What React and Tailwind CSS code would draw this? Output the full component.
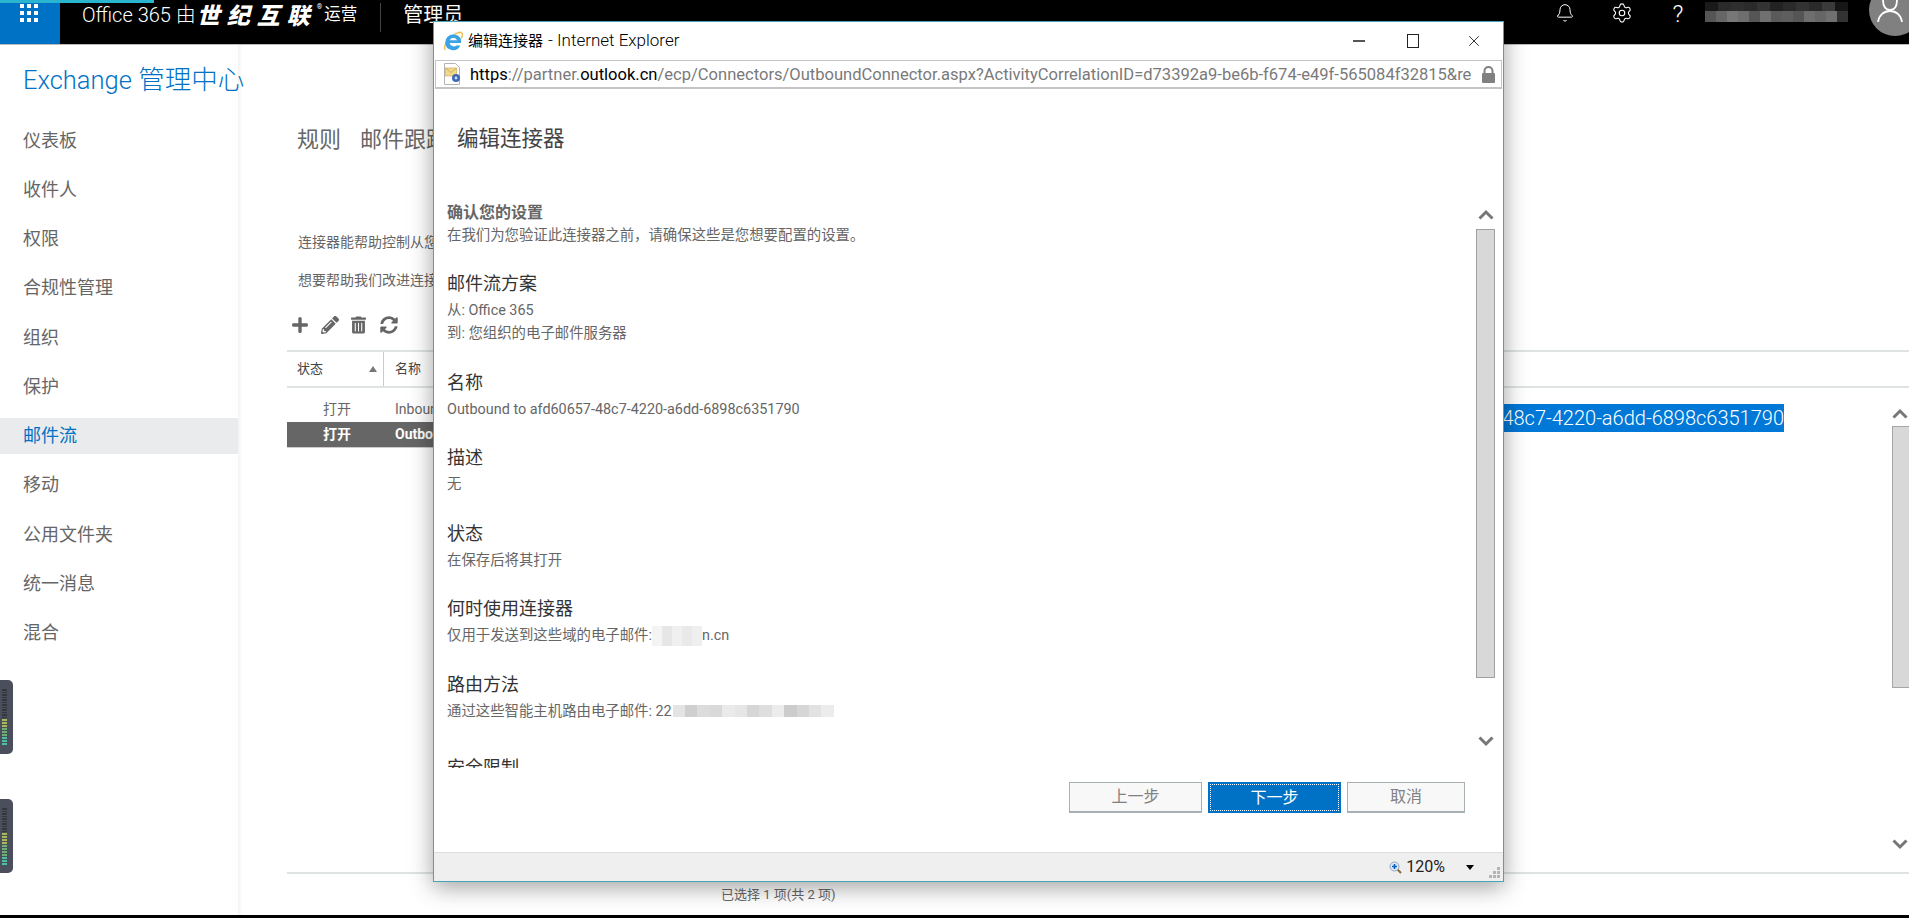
import { Bell, Settings, X } from 'lucide-react';
import { FaPlus, FaPencilAlt, FaTrashAlt, FaSyncAlt } from 'react-icons/fa';

const navItems = ['仪表板', '收件人', '权限', '合规性管理', '组织', '保护', '邮件流', '移动', '公用文件夹', '统一消息', '混合'];

// pixelated redaction blocks
const nameTop = ['#1a1a1a', '#2a2a2a', '#2e2e2e', '#2a2a2a', '#333', '#222', '#2a2a2a', '#333', '#2a2a2a', '#3a3a3a', '#161616'];
const nameBottom = ['#555', '#666', '#777', '#6e6e6e', '#555', '#707070', '#5a5a5a', '#5e5e5e', '#555', '#6e6e6e', '#666', '#707070', '#333'];
const domainBlur = ['#f4f4f4', '#e6e6e6', '#f0f0f0', '#e9e9e9', '#efefef'];
const hostBlur = ['#e4e4e4', '#cfcfcf', '#dcdcdc', '#d9d9d9', '#eaeaea', '#e6e6e6', '#d6d6d6', '#dedede', '#ececec', '#cccccc', '#d6d6d6', '#e2e2e2', '#ececec'];

const Meter = ({ dark, lit, bottom }) => (
  <div className="w-[13px] h-[74px] bg-[#4b4f5c] rounded-r-[5px] pl-[2px] flex flex-col justify-end gap-[1px]" style={{ paddingBottom: bottom }}>
    {Array.from({ length: dark }).map((_, i) => (
      <div key={i} className="w-[5px] h-[1.500px] bg-[#34363f]" />
    ))}
    {Array.from({ length: lit }).map((_, i) => (
      <div key={i} className={`w-[5px] h-[2px] ${i < lit / 3 ? 'bg-[#a8b85a]' : i < (lit * 2) / 3 ? 'bg-[#6fae74]' : 'bg-[#4cc0a0]'}`} />
    ))}
  </div>
);

const Section = ({ title, lines, children }) => (
  <div className="mb-[22.500px]">
    <div className="text-[18px] leading-[30px] text-[#333]">{title}</div>
    {lines && lines.map((l) => (
      <div key={l} className="text-[14.400px] leading-[23px] text-[#666]">{l}</div>
    ))}
    {children}
  </div>
);

const ChevUp = ({ className }) => (
  <svg viewBox="0 0 16 11" className={className}>
    <path d="M1.500 9.500L8 3l6.500 6.500" fill="none" stroke="#777" strokeWidth="3" />
  </svg>
);

const ChevDown = ({ className }) => (
  <svg viewBox="0 0 16 11" className={className}>
    <path d="M1.500 1.500L8 8l6.500-6.500" fill="none" stroke="#777" strokeWidth="3" />
  </svg>
);

const IeIcon = () => (
  <svg viewBox="0 0 20 20" className="w-[20px] h-[21px]">
    <path d="M2.500 18.500C0 16.500 3 10 8 5.500 12.500 1.500 17 0 18.800 1.500c1.200 1.200.5 3.500-.8 5.500" fill="none" stroke="#eec25a" strokeWidth="1.600" />
    <path d="M10.500 3a7.800 7.800 0 0 0-8.300 8A7.900 7.900 0 0 0 17.300 14h-4a4.200 4.200 0 0 1-6.700-2.500h11.500C18.800 6.500 15.500 3 10.500 3zM6.700 8.800a3.900 3.900 0 0 1 7.400 0z" fill="#3aa3e3" />
  </svg>
);

const MailPage = () => (
  <svg viewBox="0 0 20 22" className="w-[20px] h-[22px] shrink-0">
    <path d="M2.500.5h11l4 4v17h-15z" fill="#fff" stroke="#b4b4b4" />
    <rect x="3.500" y="5" width="11" height="8" fill="#f2d98a" stroke="#c9a74e" strokeWidth=".6" />
    <path d="M3.500 5l5.500 4.500L14.500 5" fill="none" stroke="#c9a74e" strokeWidth=".8" />
    <circle cx="14" cy="15" r="4" fill="#3f69b5" />
    <circle cx="14" cy="15" r="1.400" fill="#cfe0f5" />
  </svg>
);

const Padlock = () => (
  <svg viewBox="0 0 15 17" className="w-[15px] h-[17px] ml-[9px] shrink-0">
    <path d="M3.500 8V5a4 4 0 0 1 8 0v3" fill="none" stroke="#808080" strokeWidth="2" />
    <rect x="1" y="7" width="13" height="10" rx="1" fill="#808080" />
  </svg>
);

const DialogWindow = () => (
  <div className="absolute left-[433px] top-[21px] w-[1071px] h-[861px] bg-white border border-[#45a6b5] shadow-[0_5px_22px_rgba(0,0,0,0.38)] flex flex-col">
    {/* title bar */}
    <div className="h-[38px] flex items-center pl-[9px] shrink-0 text-black">
      <IeIcon />
      <span className="ml-[5px] text-[15px]">编辑连接器</span>
      <span className="ml-[5px] text-[17px] font-light">- Internet Explorer</span>
      <div className="ml-auto flex items-center text-[#222]">
        <div className="w-[12px] h-[2px] bg-[#555] mr-[42px]" />
        <div className="w-[12px] h-[14px] border border-[#222] mr-[46px]" />
        <X className="w-[18px] h-[18px] mr-[20px]" strokeWidth={1.200} />
      </div>
    </div>
    {/* address bar */}
    <div className="mx-[1px] h-[29px] mb-[1px] border border-[#c4c4c4] border-b-2 flex items-center pl-[6px] shrink-0 text-[16.550px] text-[#7a7a7a] whitespace-nowrap">
      <MailPage />
      <span className="ml-[8px] w-[1002px] overflow-hidden pt-[2px]">
        <span className="text-black">https</span>://partner.<span className="text-black">outlook.cn</span>/ecp/Connectors/OutboundConnector.aspx?ActivityCorrelationID=d73392a9-be6b-f674-e49f-565084f32815&amp;re
      </span>
      <Padlock />
    </div>
    {/* body */}
    <div className="flex-1 flex flex-col min-h-0">
      <div className="h-[110px] shrink-0 pl-[23px] pt-[34px] text-[21.500px] leading-[30px] text-[#444]">编辑连接器</div>
      <div className="h-[568px] shrink-0 flex">
        <div className="flex-1 overflow-hidden pl-[13px] pt-[1px]">
          <div className="mb-[22px]">
            <div className="text-[16px] leading-[24px] font-bold text-[#666]">确认您的设置</div>
            <div className="text-[14.400px] leading-[22px] text-[#666]">在我们为您验证此连接器之前，请确保这些是您想要配置的设置。</div>
          </div>
          <Section title="邮件流方案" lines={['从: Office 365', '到: 您组织的电子邮件服务器']} />
          <Section title="名称" lines={['Outbound to afd60657-48c7-4220-a6dd-6898c6351790']} />
          <Section title="描述" lines={['无']} />
          <Section title="状态" lines={['在保存后将其打开']} />
          <Section title="何时使用连接器">
            <div className="text-[14.400px] leading-[23px] text-[#666] flex items-center">
              <span>仅用于发送到这些域的电子邮件:</span>
              <span className="inline-flex h-[20px]">
                {domainBlur.map((c, i) => (
                  <span key={i} className="w-[10px] h-[20px]" style={{ background: c }} />
                ))}
              </span>
              <span>n.cn</span>
            </div>
          </Section>
          <Section title="路由方法">
            <div className="text-[14.400px] leading-[23px] text-[#666] flex items-center">
              <span>通过这些智能主机路由电子邮件: 22</span>
              <span className="inline-flex h-[12px] ml-[1px]">
                {hostBlur.map((c, i) => (
                  <span key={i} className="w-[12.400px] h-[12px]" style={{ background: c }} />
                ))}
              </span>
            </div>
          </Section>
          <div className="text-[18px] leading-[28px] text-[#333] pt-[8.500px]">安全限制</div>
        </div>
        <div className="w-[27px] mr-[4px] flex flex-col items-center pt-[9px] shrink-0">
          <ChevUp className="w-[16px] h-[11px]" />
          <div className="mt-[9px] w-[19px] h-[449px] bg-[#d8d8d8] border border-[#a0a0a0]" />
          <ChevDown className="w-[16px] h-[11px] mt-[58px]" />
        </div>
      </div>
      <div className="flex-1 flex justify-end items-start pt-[14px] pr-[38px] gap-[6px]">
        <button className="w-[133px] h-[31px] bg-[#f8f8f8] border border-[#a9b0b3] border-b-2 text-[16px] text-[#808080]">上一步</button>
        <button className="w-[133px] h-[31px] bg-[#0072c6] text-[16px] text-white p-[2px]">
          <span className="flex items-center justify-center h-full border border-dotted border-white">下一步</span>
        </button>
        <button className="w-[118px] h-[31px] bg-[#f8f8f8] border border-[#a9b0b3] border-b-2 text-[16px] text-[#808080]">取消</button>
      </div>
    </div>
    {/* status bar */}
    <div className="h-[29px] shrink-0 bg-[#efefef] border-t border-[#dedede] flex items-center justify-end pr-[3px]">
      <svg viewBox="0 0 13 13" className="w-[13px] h-[13px] mr-[4px]">
        <path d="M8 8l4 4" stroke="#8a6a3a" strokeWidth="2" />
        <circle cx="5.500" cy="5.500" r="4.500" fill="#dfe9f5" stroke="#8fa4c0" />
        <path d="M5.500 3v5M3 5.500h5" stroke="#0a5fc0" strokeWidth="1.600" />
      </svg>
      <span className="text-[16px] text-[#222] mr-[21px]">120%</span>
      <span className="w-0 h-0 border-x-[4.500px] border-x-transparent border-t-[5px] border-t-black mr-[15px]" />
      <div className="grid grid-cols-3 gap-[1px] w-[11px] mt-[10px]">
        {[0, 0, 1, 0, 1, 1, 1, 1, 1].map((on, i) => (
          <span key={i} className={on ? 'h-[3px] bg-[#b4b4b4]' : 'h-[3px]'} />
        ))}
      </div>
    </div>
  </div>
);

const App = () => {
  return (
    <div className="relative w-[1909px] h-[918px] overflow-hidden bg-white flex flex-col font-['Roboto','Noto_Sans_CJK_SC',sans-serif]">
      {/* Top bar */}
      <header className="relative h-[45px] shrink-0 bg-black border-b border-[#bbb] flex items-start text-white">
        <div className="absolute left-0 top-0 w-[154px] h-[3px] bg-[#29b4cf]" />
        <div className="w-[60px] h-[44px] bg-[#0072c6] shrink-0 pt-[4px] pl-[20px]">
          <div className="grid grid-cols-3 gap-[3px] w-[18px]">
            {Array.from({ length: 9 }).map((_, i) => (
              <div key={i} className="w-[4px] h-[4px] bg-white" />
            ))}
          </div>
        </div>
        <span className="ml-[22px] text-[20px] leading-[30px] font-light">Office 365 由</span>
        <span className="ml-[1px] text-[23px] leading-[28px] font-black italic tracking-[7px] font-['Noto_Sans_CJK_SC',sans-serif]">世纪互联</span>
        <span className="text-[7px] leading-[14px]">®</span>
        <span className="text-[16.500px] leading-[30px] ml-[2px]">运营</span>
        <div className="ml-[23px] mt-[3px] w-px h-[29px] bg-[#444]" />
        <span className="ml-[22px] text-[20px] leading-[30px]">管理员</span>
        <div className="ml-auto flex items-start -mr-[12px]">
          <Bell className="w-[20px] h-[20px] mt-[3px]" strokeWidth={1.200} />
          <Settings className="w-[22px] h-[22px] ml-[36px] mt-[2px]" strokeWidth={1.200} />
          <span className="ml-[37px] w-[16px] text-[24px] leading-[28px] font-light text-center">?</span>
          <div className="ml-[19px] mt-[2px] w-[143px]">
            <div className="flex h-[9px]">
              {nameTop.map((c, i) => (
                <div key={i} className="flex-1" style={{ background: c }} />
              ))}
            </div>
            <div className="flex h-[11px]">
              {nameBottom.map((c, i) => (
                <div key={i} className="flex-1" style={{ background: c }} />
              ))}
            </div>
          </div>
          <div className="ml-[21px] -mt-[16px] w-[52px] h-[52px] bg-[#808080] rounded-full pl-[8px] pt-[16px]">
            <svg viewBox="0 0 26 22" className="w-[26px] h-[22px]">
              <path d="M6 0c0 7 3 10 7 10s7-3 7-10M1 22c1-7 6-11 12-11s11 4 12 11" fill="none" stroke="#fff" strokeWidth="1.800" />
            </svg>
          </div>
        </div>
      </header>

      {/* Page */}
      <div className="flex-1 flex min-h-0">
        <aside className="w-[238px] shrink-0">
          <h1 className="pl-[23px] pt-[19px] text-[26.500px] leading-[32px] text-[#0072c6] font-light whitespace-nowrap"><span className="text-[25.500px]">Exchange</span> 管理中心</h1>
          <nav className="mt-[26px]">
            {navItems.map((item) => (
              <div
                key={item}
                className={`pl-[23px] h-[36px] mb-[13.250px] flex items-center text-[18px] ${item === '邮件流' ? 'bg-[#eaebec] text-[#0072c6]' : 'text-[#666]'}`}
              >
                {item}
              </div>
            ))}
          </nav>
        </aside>

        <main className="flex-1 min-w-0 flex flex-col pt-[77px] shadow-[inset_4px_0_4px_-3px_rgba(0,0,0,0.08)]">
          <div className="pl-[59px] h-[34px] flex items-center gap-[19px] text-[22px] text-[#666] shrink-0">
            <span>规则</span>
            <span>邮件跟踪</span>
          </div>
          <p className="pl-[60px] mt-[76px] text-[14px] leading-[20px] text-[#666]">连接器能帮助控制从您的组织流入或流出的邮件。</p>
          <p className="pl-[60px] mt-[18px] text-[14px] leading-[20px] text-[#666]">想要帮助我们改进连接器吗？</p>
          <div className="pl-[53px] mt-[21px] h-[28px] flex items-center text-[#666] shrink-0">
            <FaPlus className="w-[18px] h-[18px]" />
            <FaPencilAlt className="ml-[12px] w-[18px] h-[18px]" />
            <FaTrashAlt className="ml-[12px] w-[15px] h-[18px]" />
            <FaSyncAlt className="ml-[14px] w-[18px] h-[18px]" />
          </div>
          <div className="ml-[49px] mt-[11px] flex-1 flex flex-col min-h-0">
            <div className="h-[38px] shrink-0 border-y-2 border-[#dfe3e4] flex items-center text-[13px] text-[#444]">
              <div className="w-[97px] h-full pl-[10px] pr-[6px] border-r border-[#c8cccd] flex items-center justify-between">
                <span>状态</span>
                <span className="w-0 h-0 border-x-[4px] border-x-transparent border-b-[6px] border-b-[#777]" />
              </div>
              <span className="ml-[11px]">名称</span>
            </div>
            <div className="flex-1 min-h-0 flex">
              <div className="w-[600px] shrink-0 pt-[8px] text-[14px]">
                <div className="h-[26px] flex items-center text-[#666]">
                  <span className="w-[108px] pl-[36px]">打开</span>
                  <span>Inbound from afd60657</span>
                </div>
                <div className="h-[26px] flex items-center bg-[#666] border-b border-[#ccc] text-white font-bold">
                  <span className="w-[108px] pl-[36px]">打开</span>
                  <span>Outbound to afd60657</span>
                </div>
              </div>
              <div className="flex-1 flex min-w-0">
                <div className="flex-1 pt-[16px] pr-[107px] flex justify-end items-start">
                  <span className="bg-[#0078d7] text-white text-[20px] leading-[28px] font-light whitespace-nowrap">Outbound to afd60657-48c7-4220-a6dd-6898c6351790</span>
                </div>
                <div className="w-[18px] shrink-0 pt-[20px] flex flex-col items-center">
                  <ChevUp className="w-[16px] h-[11px] shrink-0" />
                  <div className="mt-[7px] ml-[1px] w-[18px] h-[262px] bg-[#d8d8d8] border border-[#a6a6a6] shrink-0" />
                  <ChevDown className="w-[16px] h-[11px] mt-[151px] shrink-0" />
                </div>
              </div>
            </div>
            <div className="h-[43px] shrink-0 border-t-2 border-[#dfe3e4] flex items-center pl-[434px] text-[13px] text-[#666]">已选择 1 项(共 2 项)</div>
          </div>
        </main>
      </div>
      <div className="h-[3px] shrink-0 bg-black" />

      {/* Desktop widgets peeking in at the left edge */}
      <div className="absolute left-0 top-[680px]"><Meter dark={12} lit={9} bottom={9} /></div>
      <div className="absolute left-0 top-[799px]"><Meter dark={10} lit={11} bottom={8} /></div>

      <DialogWindow />
    </div>
  );
};

export default App;
